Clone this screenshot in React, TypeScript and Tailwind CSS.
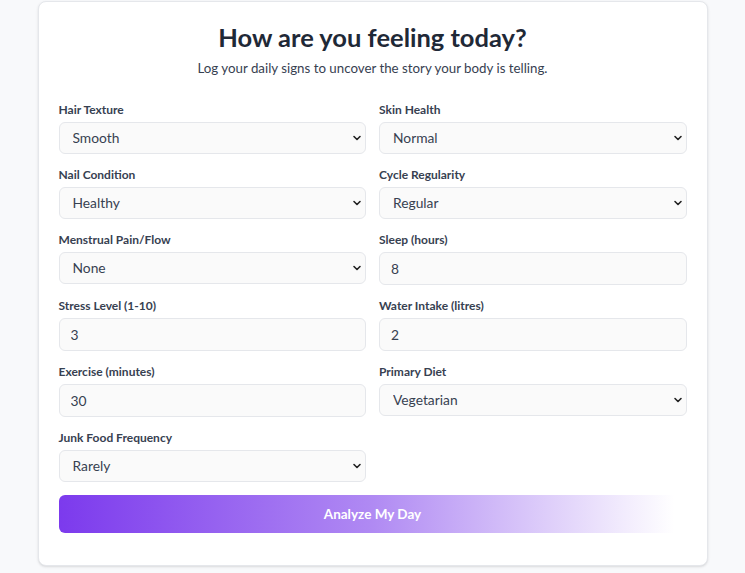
import React from "react";

const Chevron = () => (
  <svg
    className="pointer-events-none absolute right-[4px] top-1/2 -translate-y-1/2"
    width="10"
    height="10"
    viewBox="0 0 10 10"
    fill="none"
  >
    <path d="M2 3.5 L5 6.5 L8 3.5" stroke="#222" strokeWidth="1.6" strokeLinecap="round" strokeLinejoin="round" />
  </svg>
);

const SelectField = ({ label, value, options }: { label: string; value: string; options: string[] }) => (
  <div className="flex flex-col">
    <label className="mb-[4px] text-[12px] leading-[16px] font-bold text-[#374151]">{label}</label>
    <div className="relative">
      <select
        defaultValue={value}
        className="h-[32px] w-full appearance-none rounded-md border border-[#e5e7eb] bg-[#fafafa] pl-[13px] pr-6 text-[13.8px] text-[#374151] outline-none"
      >
        {options.map((o) => (
          <option key={o}>{o}</option>
        ))}
      </select>
      <Chevron />
    </div>
  </div>
);

const InputField = ({ label, value }: { label: string; value: string }) => (
  <div className="flex flex-col">
    <label className="mb-[4px] text-[12px] leading-[16px] font-bold text-[#374151]">{label}</label>
    <input
      defaultValue={value}
      className="h-[33px] w-full rounded-md border border-[#e5e7eb] bg-[#fafafa] px-[11px] text-[13.8px] text-[#374151] outline-none"
    />
  </div>
);

export default function App() {
  return (
    <div
      className="flex min-h-screen justify-center bg-[#f8f9fb]"
      style={{ fontFamily: 'Lato, "Open Sans", sans-serif' }}
    >
      <div className="mt-[1px] mb-[6px] h-fit w-[670px] rounded-lg border border-[#e5e7eb] bg-white px-5 pt-[19px] pb-[32px] shadow-sm">
        <h1 className="text-center text-[25.5px] leading-[32px] font-bold text-[#1f2937]">How are you feeling today?</h1>
        <p className="mt-[5px] text-center text-[13.3px] leading-[20px] text-[#374151]">
          Log your daily signs to uncover the story your body is telling.
        </p>
        <div className="mt-[24px] grid grid-cols-2 gap-x-[13px] gap-y-[13px]">
          <SelectField label="Hair Texture" value="Smooth" options={["Smooth", "Dry", "Oily", "Frizzy"]} />
          <SelectField label="Skin Health" value="Normal" options={["Normal", "Dry", "Oily", "Acne"]} />
          <SelectField label="Nail Condition" value="Healthy" options={["Healthy", "Brittle", "Ridged"]} />
          <SelectField label="Cycle Regularity" value="Regular" options={["Regular", "Irregular"]} />
          <SelectField label="Menstrual Pain/Flow" value="None" options={["None", "Mild", "Heavy"]} />
          <InputField label="Sleep (hours)" value="8" />
          <InputField label="Stress Level (1-10)" value="3" />
          <InputField label="Water Intake (litres)" value="2" />
          <InputField label="Exercise (minutes)" value="30" />
          <SelectField label="Primary Diet" value="Vegetarian" options={["Vegetarian", "Vegan", "Non-Vegetarian"]} />
          <SelectField label="Junk Food Frequency" value="Rarely" options={["Rarely", "Sometimes", "Often"]} />
        </div>
        <button className="mt-[13px] h-[38px] w-full rounded-md bg-[linear-gradient(90deg,#7c3aed_0%,#b08af3_50%,#ffffff_98%)] text-[13.5px] font-bold text-white">
          Analyze My Day
        </button>
      </div>
    </div>
  );
}
